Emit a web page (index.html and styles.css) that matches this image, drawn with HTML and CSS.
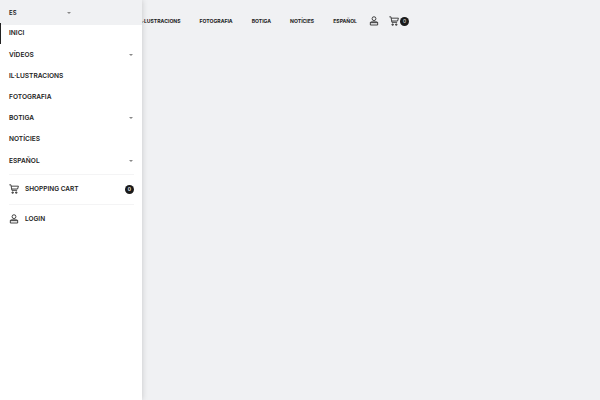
FILE: index.html
```html
<!DOCTYPE html>
<html lang="es">
<head>
  <meta charset="UTF-8" />
  <title>Menu</title>
  <meta name="viewport" content="width=device-width, initial-scale=1.0" />
  <link rel="stylesheet" href="styles.css">
</head>
<body>

<!-- HEADER -->
<header class="site-header">
  <nav class="top-nav">
    <a>Inici</a>
    <a>Vídeos</a>
    <a>Il·lustracions</a>
    <a>Fotografia</a>
    <a>Botiga</a>
    <a>Notícies</a>
    <a>Español</a>
  </nav>
  <svg class="icon top-user" viewBox="0 0 12 12"><use href="#i-user"/></svg>
  <svg class="icon top-cart" viewBox="0 0 12 12"><use href="#i-cart"/></svg>
  <span class="badge">0</span>
</header>

<!-- SIDE DRAWER -->
<aside class="drawer">
  <div class="lang-bar">
    <span>ES</span>
    <span class="caret"></span>
  </div>
  <ul class="drawer-menu">
    <li class="current">Inici</li>
    <li>Vídeos <span class="caret"></span></li>
    <li>Il·lustracions</li>
    <li>Fotografia</li>
    <li>Botiga <span class="caret"></span></li>
    <li>Notícies</li>
    <li>Español <span class="caret"></span></li>
  </ul>
  <div class="drawer-row">
    <svg class="icon" viewBox="0 0 12 12"><use href="#i-cart"/></svg>
    <span class="row-label">Shopping cart</span>
    <span class="badge">0</span>
  </div>
  <div class="drawer-row">
    <svg class="icon" viewBox="0 0 12 12"><use href="#i-user"/></svg>
    <span class="row-label">Login</span>
  </div>
</aside>

<!-- ICONS -->
<svg class="icon-defs" width="0" height="0">
  <symbol id="i-user" viewBox="0 0 12 12">
    <circle cx="6" cy="3.2" r="2.3"/>
    <path d="M1.6 8h8.8v2.8H1.6z M1.6 8c0-.6.5-1 1.2-1h6.4c.7 0 1.2.4 1.2 1"/>
  </symbol>
  <symbol id="i-cart" viewBox="0 0 12 12">
    <path d="M.4 1h1.9l1.2 6.6h6.2M2.7 2.6h8.6l-1 3.4H3.3"/>
    <path d="M3.6 9.6h1.5v1.4H3.6z M8 9.6h1.5v1.4H8z"/>
  </symbol>
</svg>

</body>
</html>
```

FILE: styles.css
```css
body {
  margin: 0;
  height: 400px;
  overflow: hidden;
  background-color: #f0f1f3;
  color: #222;
  font-family: 'Inter', 'Liberation Sans', sans-serif;
}

.site-header {
  display: flex;
  align-items: center;
  justify-content: flex-end;
  width: 409px;
  height: 42px;
  white-space: nowrap;
}

.top-nav {
  display: flex;
  gap: 19px;
  font-size: 5.1px;
  font-weight: 700;
  text-transform: uppercase;
}

.icon {
  width: 10px;
  height: 10px;
  flex: none;
  fill: none;
  stroke: #222;
  stroke-width: 1;
}

.icon-defs {
  position: absolute;
}

.top-user {
  margin-left: 12px;
}

.top-cart {
  margin-left: 10px;
}

.badge {
  width: 9px;
  height: 9px;
  margin-left: 1px;
  border-radius: 50%;
  background-color: #1a1a1a;
  color: #fff;
  font-size: 5px;
  line-height: 9px;
  text-align: center;
}

.drawer {
  position: absolute;
  top: 0;
  left: 0;
  width: 142px;
  height: 400px;
  background-color: #fff;
  box-shadow: 0 0 6px rgba(0, 0, 0, 0.18);
  font-size: 6.6px;
  font-weight: 600;
  text-transform: uppercase;
}

.lang-bar {
  display: flex;
  align-items: center;
  justify-content: space-between;
  height: 25px;
  padding: 0 71px 0 9px;
  background-color: #f0f1f3;
  font-size: 6px;
}

.caret {
  width: 0;
  height: 0;
  border-left: 2.5px solid transparent;
  border-right: 2.5px solid transparent;
  border-top: 2.5px solid #888;
}

.drawer-menu {
  margin: -2.2px 0 0;
  padding: 0 0 2.8px;
  list-style: none;
}

.drawer-menu li {
  display: flex;
  align-items: center;
  justify-content: space-between;
  height: 21.2px;
  padding: 0 9px;
}

.drawer-menu .current {
  border-left: 1px solid #222;
  padding-left: 8px;
}

.drawer-row {
  display: flex;
  align-items: center;
  gap: 6px;
  height: 29px;
  margin: 0 8px 0 9px;
  font-size: 6.5px;
  border-top: 1px solid #f4f4f5;
}

.row-label {
  flex: 1;
}
```
